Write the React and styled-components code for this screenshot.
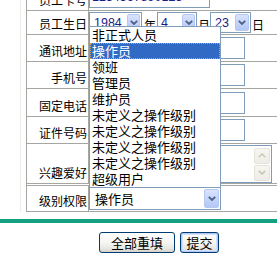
import React from "react";
import styled, { createGlobalStyle } from "styled-components";

const LINE = "#a6a6a0";
const FIELD = "#7f9db9";
const CJK = `"Noto Sans CJK SC", "Noto Sans", sans-serif`;

const Global = createGlobalStyle`
  html, body { margin: 0; padding: 0; background: #fff; overflow: hidden; }
  body { font-family: "Liberation Sans", "Noto Sans CJK SC", sans-serif; }
`;

const Page = styled.div`
  width: 277px;
  height: 254px;
  overflow: hidden;
`;

const Frame = styled.div`
  margin-left: 20px;
  border-left: 1px solid #ececec;
  padding-left: 5px;
`;

const Table = styled.div`
  margin-top: -16px;
  border-left: 1px solid ${LINE};
`;

const Row = styled.div`
  display: grid;
  grid-template-columns: 62px 1fr;
  height: ${(p) => p.$h}px;
  box-sizing: border-box;
  border-bottom: ${(p) => (p.$double ? `3px double ${LINE}` : `1px solid ${LINE}`)};
`;

const Label = styled.div`
  box-sizing: border-box;
  border-right: 1px solid ${LINE};
  display: flex;
  justify-content: flex-end;
  align-items: flex-end;
  padding: 0 1px 3px 0;
  font-family: ${CJK};
  font-size: 12px;
  line-height: 14px;
  color: #000;
  white-space: nowrap;
`;

const Value = styled.div`
  display: flex;
  align-items: center;
  min-width: 0;
`;

const TextBox = styled.div`
  box-sizing: border-box;
  width: ${(p) => p.$w}px;
  height: 22px;
  border: 1px solid ${FIELD};
  background: #fff;
  display: flex;
  align-items: flex-end;
  padding: 0 2px 3px 2px;
  font-size: 12.5px;
  line-height: 14px;
  color: #1c1c86;
  white-space: nowrap;
  flex: none;
`;

const Select = styled.div`
  position: relative;
  box-sizing: border-box;
  width: ${(p) => p.$w}px;
  height: ${(p) => p.$h}px;
  border: 1px solid ${FIELD};
  background: #fff;
  display: flex;
  align-items: center;
  padding-left: ${(p) => p.$pad}px;
  font-family: ${(p) => (p.$cjk ? CJK : `"Liberation Sans", sans-serif`)};
  font-size: ${(p) => (p.$cjk ? 13 : 12.5)}px;
  color: ${(p) => (p.$cjk ? "#000" : "#1c1c86")};
  flex: none;
  white-space: nowrap;
`;

const ArrowBtn = styled.div`
  margin-left: auto;
  margin-right: 1px;
  box-sizing: border-box;
  width: ${(p) => p.$w}px;
  height: calc(100% - 2px);
  border: 1px solid #b6c8f2;
  border-radius: 2px;
  background: linear-gradient(180deg, #d9e3fd 0%, #c3d3fa 55%, #b4c7f5 100%);
  display: flex;
  align-items: center;
  justify-content: center;
`;

const Unit = styled.span`
  font-family: ${CJK};
  font-size: 12px;
  line-height: 14px;
  padding-top: 4px;
  margin: 0 ${(p) => p.$mr}px 0 ${(p) => p.$ml}px;
  color: #000;
`;

const DropList = styled.div`
  position: absolute;
  left: -1px;
  bottom: 100%;
  width: ${(p) => p.$w}px;
  box-sizing: border-box;
  border: 1px solid ${FIELD};
  background: #fff;
  z-index: 10;
`;

const Option = styled.div`
  height: 16px;
  line-height: 16px;
  padding-left: 2px;
  font-family: ${CJK};
  font-size: 13px;
  color: ${(p) => (p.$on ? "#fff" : "#000")};
  background: ${(p) => (p.$on ? "#316ac5" : "transparent")};
  outline: ${(p) => (p.$on ? "1px dotted #d4a04a" : "none")};
  outline-offset: -1px;
  white-space: nowrap;
`;

const Area = styled.div`
  box-sizing: border-box;
  width: 183px;
  height: 38px;
  border: 1px solid ${FIELD};
  background: #fff;
  display: flex;
  justify-content: flex-end;
  flex: none;
`;

const ScrollCol = styled.div`
  width: 16px;
  margin-right: 1px;
  padding-top: 2px;
  display: flex;
  flex-direction: column;
  gap: 1px;
`;

const ScrollBtn = styled.div`
  box-sizing: border-box;
  height: 16px;
  border: 1px solid #e6e3d9;
  border-radius: 2px;
  background: linear-gradient(180deg, #f7f6f2, #eeece5);
  display: flex;
  align-items: center;
  justify-content: center;
`;

const GreenBar = styled.div`
  margin-top: 7px;
  height: 4px;
  background: #12a07e;
`;

const ButtonRow = styled.div`
  margin-top: 9px;
  padding-left: 99px;
  display: flex;
  gap: 5px;
`;

const Button = styled.button`
  box-sizing: border-box;
  width: ${(p) => p.$w}px;
  height: 21px;
  padding: 0;
  border: 1px solid #003c74;
  border-radius: 3px;
  background: linear-gradient(180deg, #ffffff 0%, #f4f4f0 55%, #e6e5de 85%, #d6d0c5 100%);
  box-shadow: ${(p) =>
    p.$default ? "inset 0 0 0 1px #b3c8f3, inset 0 0 0 2px #d3e1fb" : "none"};
  font-family: ${CJK};
  font-size: 13px;
  line-height: 17px;
  color: #000;
`;

const Chevron = ({ color = "#4d6185" }) => (
  <svg width="8" height="5" viewBox="0 0 8 5">
    <path d="M0.8 0.8 L4 4 L7.2 0.8" fill="none" stroke={color} strokeWidth="1.8" />
  </svg>
);

const ChevronUp = () => (
  <svg width="8" height="5" viewBox="0 0 8 5">
    <path d="M0.8 4.2 L4 1 L7.2 4.2" fill="none" stroke="#cbc8bc" strokeWidth="1.6" />
  </svg>
);

const levels = [
  "非正式人员",
  "操作员",
  "领班",
  "管理员",
  "维护员",
  "未定义之操作级别",
  "未定义之操作级别",
  "未定义之操作级别",
  "未定义之操作级别",
  "超级用户",
];

export default function App() {
  return (
    <Page>
      <Global />
      <Frame>
        <Table>
          <Row $h={27}>
            <Label>员工卡号</Label>
            <Value>
              <TextBox $w={121}>1234567890123</TextBox>
            </Value>
          </Row>
          <Row $h={24}>
            <Label>员工生日</Label>
            <Value>
              <Select $w={53} $h={21} $pad={4}>
                1984
                <ArrowBtn $w={13}>
                  <Chevron />
                </ArrowBtn>
              </Select>
              <Unit $ml={2} $mr={1}>年</Unit>
              <Select $w={40} $h={21} $pad={3}>
                4
                <ArrowBtn $w={13}>
                  <Chevron />
                </ArrowBtn>
              </Select>
              <Unit $ml={1} $mr={0}>月</Unit>
              <Select $w={41} $h={21} $pad={4}>
                23
                <ArrowBtn $w={14}>
                  <Chevron />
                </ArrowBtn>
              </Select>
              <Unit $ml={1} $mr={0}>日</Unit>
            </Value>
          </Row>
          <Row $h={27}>
            <Label>通讯地址</Label>
            <Value>
              <TextBox $w={156} />
            </Value>
          </Row>
          <Row $h={27}>
            <Label>手机号</Label>
            <Value>
              <TextBox $w={156} />
            </Value>
          </Row>
          <Row $h={28}>
            <Label>固定电话</Label>
            <Value>
              <TextBox $w={156} />
            </Value>
          </Row>
          <Row $h={27}>
            <Label>证件号码</Label>
            <Value>
              <TextBox $w={156} />
            </Value>
          </Row>
          <Row $h={42} $double>
            <Label>兴趣爱好</Label>
            <Value>
              <Area>
                <ScrollCol>
                  <ScrollBtn>
                    <ChevronUp />
                  </ScrollBtn>
                  <ScrollBtn>
                    <Chevron color="#cbc8bc" />
                  </ScrollBtn>
                </ScrollCol>
              </Area>
            </Value>
          </Row>
          <Row $h={26}>
            <Label>级别权限</Label>
            <Value>
              <Select $w={132} $h={23} $pad={5} $cjk>
                操作员
                <ArrowBtn $w={15}>
                  <Chevron />
                </ArrowBtn>
                <DropList $w={132}>
                  {levels.map((l, i) => (
                    <Option key={i} $on={i === 1}>
                      {l}
                    </Option>
                  ))}
                </DropList>
              </Select>
            </Value>
          </Row>
        </Table>
      </Frame>
      <GreenBar />
      <ButtonRow>
        <Button $w={76}>全部重填</Button>
        <Button $w={39} $default>
          提交
        </Button>
      </ButtonRow>
    </Page>
  );
}
